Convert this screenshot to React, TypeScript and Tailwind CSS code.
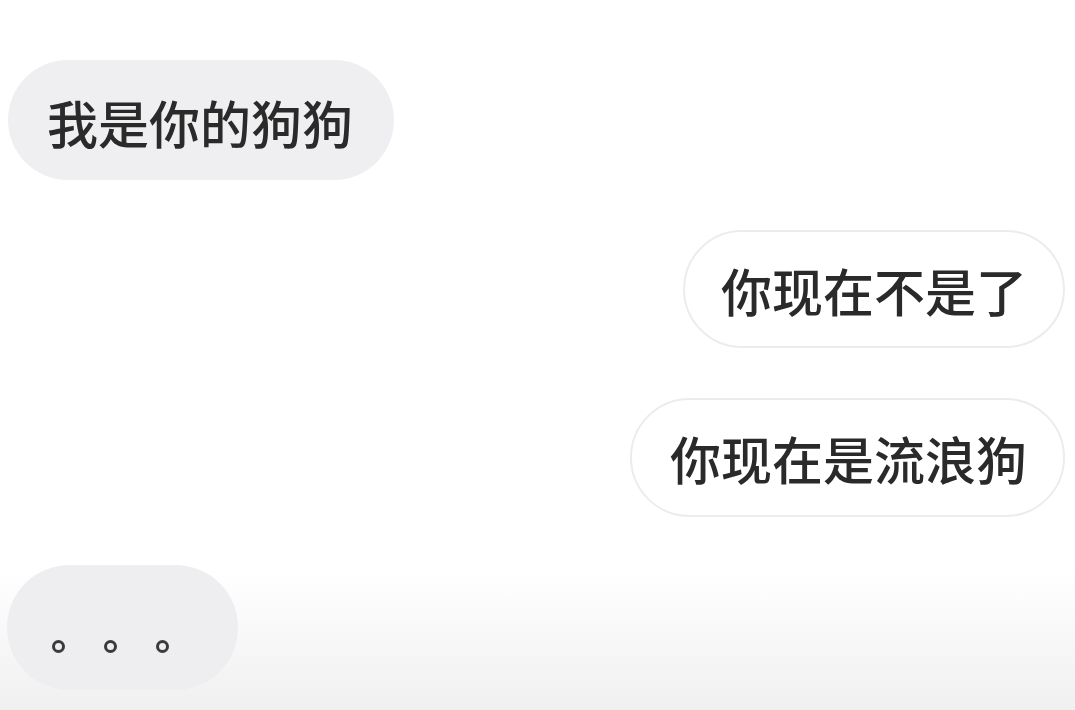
import React from "react";

const font = { fontFamily: '"Noto Sans CJK SC", "Noto Sans", sans-serif' };

export default function App() {
  return (
    <div
      className="w-[1075px] h-[710px] overflow-hidden bg-linear-to-b from-white from-[80%] to-[#f0f0f0] flex flex-col pt-[60px] pl-[8px] pr-[10px]"
      style={font}
    >
      <div className="self-start h-[120px] rounded-full bg-[#efeff1] pl-[39px] pr-[41px] pt-[4px] flex items-center text-[51px] font-medium text-[#2a2a2a] leading-none">
        我是你的狗狗
      </div>
      <div className="self-end mt-[50px] h-[118px] rounded-full bg-white border-[2px] border-[#ececee] px-[36px] pt-[2px] flex items-center text-[51px] font-medium text-[#2a2a2a] leading-none">
        你现在不是了
      </div>
      <div className="self-end mt-[50px] h-[119px] rounded-full bg-white border-[2px] border-[#ececee] pl-[38px] pr-[36px] pt-[2px] flex items-center text-[51px] font-medium text-[#2a2a2a] leading-none">
        你现在是流浪狗
      </div>
      <div className="self-start mt-[48px] ml-[-1px] w-[231px] h-[125px] rounded-full bg-[#eeeef0] flex items-end pb-[37px] pl-[45px] gap-[39px]">
        <div className="w-[13px] h-[13px] rounded-full border-[3.5px] border-[#3a3a3a]" />
        <div className="w-[13px] h-[13px] rounded-full border-[3.5px] border-[#3a3a3a]" />
        <div className="w-[13px] h-[13px] rounded-full border-[3.5px] border-[#3a3a3a]" />
      </div>
    </div>
  );
}
